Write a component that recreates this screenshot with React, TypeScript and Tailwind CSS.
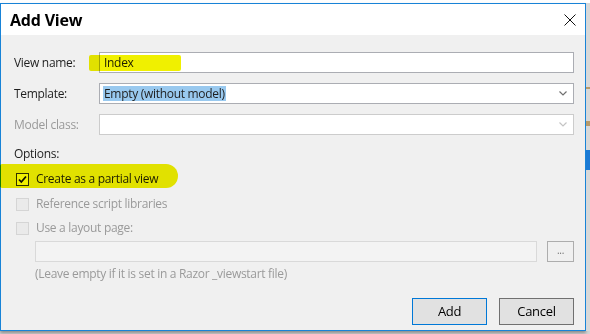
import React from 'react';

const font = { fontFamily: '"Open Sans", "Noto Sans", sans-serif' };

function Chevron({ light }: { light?: boolean }) {
  return (
    <svg width="8" height="5" viewBox="0 0 8 5" className="shrink-0">
      <path d="M0.5 0.5 L4 4 L7.5 0.5" fill="none" stroke={light ? '#c4c4c4' : '#707070'} strokeWidth="1.2" />
    </svg>
  );
}

function CheckBox({ checked, disabled }: { checked?: boolean; disabled?: boolean }) {
  return (
    <div
      className={`w-[13px] h-[13px] border flex items-center justify-center shrink-0 ${
        disabled ? 'border-[#d5d5d5] bg-[#eaeaea]' : 'border-[#333] bg-white'
      }`}
    >
      {checked && (
        <svg width="11" height="11" viewBox="0 0 11 11">
          <path d="M2 5.5 L4.3 8 L9 2.5" fill="none" stroke="#111" strokeWidth="1.8" />
        </svg>
      )}
    </div>
  );
}

export default function App() {
  return (
    <div
      className="w-[590px] h-[334px] overflow-hidden bg-[#d4d4d4] relative text-[12px] tracking-[-0.3px] text-[#1e1e1e]"
      style={font}
    >
      <div className="h-[3px] bg-white" />
      <div className="flex">
        {/* dialog */}
        <div className="w-[586px] h-[328px] border border-[#1883d7] bg-[#f0f0f0] flex flex-col shadow-[0_2px_3px_rgba(0,0,0,0.35)]">
          <div className="h-[31px] bg-white flex items-center justify-between pl-[9px] pr-[9px]">
            <span className="text-[16px] font-bold text-black tracking-[-0.2px]">Add View</span>
            <svg width="12" height="12" viewBox="0 0 12 12">
              <path d="M0.5 0.5 L11.5 11.5 M11.5 0.5 L0.5 11.5" stroke="#111" strokeWidth="1" />
            </svg>
          </div>

          <div className="flex-1 flex flex-col pl-[13px] pr-[11px] pt-[17px]">
            <div className="flex items-center h-[21px]">
              <span className="w-[85px]">View name:</span>
              <div className="flex-1 h-[21px] border border-[#abadb3] bg-white flex items-center px-[4px]">Index</div>
            </div>
            <div className="flex items-center h-[21px] mt-[10px]">
              <span className="w-[85px]">Template:</span>
              <div className="flex-1 h-[21px] border border-[#abadb3] bg-white flex items-center pl-[3px] pr-[6px] justify-between">
                <span className="bg-[#99c9ef] px-[1px] leading-[15px]">Empty (without model)</span>
                <Chevron />
              </div>
            </div>
            <div className="flex items-center h-[21px] mt-[10px]">
              <span className="w-[85px] text-[#9a9a9a]">Model class:</span>
              <div className="flex-1 h-[21px] border border-[#cccccc] bg-white flex items-center justify-end pr-[6px]">
                <Chevron light />
              </div>
            </div>

            <div className="mt-[10px] h-[18px] flex items-center">Options:</div>

            <div className="mt-[7px] flex items-center h-[18px] pl-[2px] gap-[7px]">
              <CheckBox checked />
              <span>Create as a partial view</span>
            </div>
            <div className="mt-[7px] flex items-center h-[18px] pl-[2px] gap-[7px] text-[#9a9a9a]">
              <CheckBox disabled />
              <span>Reference script libraries</span>
            </div>
            <div className="mt-[6px] flex items-center h-[18px] pl-[2px] gap-[7px] text-[#9a9a9a]">
              <CheckBox disabled />
              <span>Use a layout page:</span>
            </div>

            <div className="mt-[4px] flex items-center pl-[21px] gap-[10px]">
              <div className="flex-1 h-[21px] border border-[#d9d9d9] bg-[#f3f3f3]" />
              <div className="w-[27px] h-[21px] border border-[#adadad] bg-[#f0f0f0] flex items-center justify-center text-[#777] text-[10px] leading-none pb-[3px]">
                ...
              </div>
            </div>
            <div className="pl-[21px] mt-[3px] text-[#9a9a9a] h-[18px] flex items-center">
              (Leave empty if it is set in a Razor _viewstart file)
            </div>

            <div className="mt-auto mb-[5px] flex justify-end gap-[12px]">
              <div className="w-[75px] h-[27px] border border-[#0078d7] bg-[#e1e1e1] flex items-center justify-center text-[13px] text-black">
                Add
              </div>
              <div className="w-[75px] h-[27px] border border-[#707070] bg-[#e1e1e1] flex items-center justify-center text-[13px] text-black">
                Cancel
              </div>
            </div>
          </div>
        </div>
        <div className="flex-1 h-[328px] bg-[#d8d8d8] flex flex-col">
          <div className="h-[2px] mt-[84px] bg-[#b89a6a]" />
          <div className="h-[5px] mt-[32px] bg-[#b89a6a]" />
          <div className="h-[20px] mt-[24px] bg-[#1c7ad4]" />
        </div>
      </div>

      {/* highlighter marks */}
      <div className="absolute left-[89px] top-[55px] w-[92px] h-[16px] bg-[#f0f000] mix-blend-multiply rounded-[2px]" />
      <div className="absolute left-0 top-[164px] w-[178px] h-[24px] bg-[#f0f000] mix-blend-multiply rounded-r-[12px] rounded-l-[2px]" />
    </div>
  );
}
